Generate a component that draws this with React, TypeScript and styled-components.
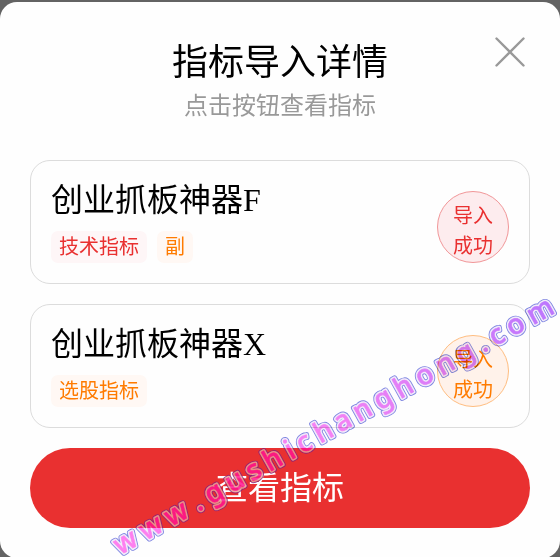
import React from 'react';
import styled, { createGlobalStyle } from 'styled-components';

const GlobalStyle = createGlobalStyle`
  *, *::before, *::after { box-sizing: border-box; }
  body { margin: 0; background: #636363; }
`;

type Tone = 'red' | 'orange';

const tones = {
  red: { text: '#e93030', tag: '#fef6f7', badge: '#fdecee', border: '#f19698' },
  orange: { text: '#ff7b00', tag: '#fff8f4', badge: '#fff2ea', border: '#ffbd80' },
};

const Screen = styled.div`
  position: relative;
  width: 560px;
  height: 557px;
  padding-top: 2px;
  overflow: hidden;
  font-family: 'Liberation Serif', 'Noto Sans CJK SC', serif;
  font-weight: 400;
`;

const Dialog = styled.main`
  position: relative;
  height: 556px;
  padding: 37px 30px 0;
  border-radius: 17px;
  background: #fefefe;
`;

const Header = styled.header`
  height: 121px;
  text-align: center;
`;

const Title = styled.h1`
  margin: 0;
  font-size: 36px;
  line-height: 48px;
  font-weight: 400;
  color: #000;
`;

const Subtitle = styled.p`
  margin: 2px 0 0;
  font-size: 24px;
  line-height: 34px;
  color: #999;
`;

const CloseButton = styled.button`
  position: absolute;
  top: 34px;
  right: 34px;
  width: 32px;
  height: 32px;
  padding: 0;
  border: 0;
  background: none;
  svg { display: block; }
`;

const CardList = styled.section`
  display: flex;
  flex-direction: column;
  gap: 20px;
`;

const Card = styled.article`
  display: flex;
  align-items: flex-start;
  justify-content: space-between;
  height: 124px;
  padding: 18px 20px 0;
  border: 1px solid #dcdcdc;
  border-radius: 20px;
`;

const CardTitle = styled.h2`
  margin: 0;
  font-size: 32px;
  line-height: 42px;
  font-weight: 400;
  color: #000;
`;

const Tags = styled.div`
  display: flex;
  gap: 10px;
  margin-top: 10px;
`;

const Tag = styled.span<{ $tone: Tone }>`
  height: 32px;
  padding: 0 8px;
  border-radius: 7px;
  font-size: 20px;
  line-height: 32px;
  color: ${(p) => tones[p.$tone].text};
  background: ${(p) => tones[p.$tone].tag};
`;

const Badge = styled.div<{ $tone: Tone }>`
  width: 72px;
  height: 72px;
  margin-top: 12px;
  padding-top: 9px;
  border: 1px solid ${(p) => tones[p.$tone].border};
  border-radius: 50%;
  font-size: 20px;
  line-height: 30px;
  text-align: center;
  color: ${(p) => tones[p.$tone].text};
  background: ${(p) => tones[p.$tone].badge};
`;

const ViewButton = styled.button`
  display: block;
  width: 100%;
  height: 80px;
  margin-top: 20px;
  padding: 0 0 6px;
  border: 0;
  border-radius: 40px;
  font: inherit;
  font-size: 32px;
  color: #fff;
  background: #e93030;
`;

const Watermark = styled.svg<{ $blend: 'multiply' | 'normal' }>`
  position: absolute;
  inset: 0;
  pointer-events: none;
  mix-blend-mode: ${(p) => p.$blend};
  opacity: ${(p) => (p.$blend === 'normal' ? 0.85 : 1)};
  text {
    font-family: 'Noto Sans', sans-serif;
    font-size: 28px;
    font-weight: 500;
    text-anchor: middle;
    stroke-linejoin: round;
  }
`;

const items: { name: string; tone: Tone; tags: { label: string; tone: Tone }[] }[] = [
  { name: '创业抓板神器F', tone: 'red', tags: [{ label: '技术指标', tone: 'red' }, { label: '副', tone: 'orange' }] },
  { name: '创业抓板神器X', tone: 'orange', tags: [{ label: '选股指标', tone: 'orange' }] },
];

const site = 'www.gushichanghong.com';
// Centre of each letter along the watermark's baseline.
const letterX =
  '12 41 70 94 113 137 158.5 180.5 200 216 238.5 260.5 283 306.5 330 354 377.5 400.5 420 436.5 458 486.5';

function SiteMark({ edge, ring, ink }: { edge: string; ring: string; ink: string }) {
  return (
    <g transform="translate(119.5 555.5) rotate(-29.1)">
      <text x={letterX} stroke={edge} strokeWidth="5.4" fill="none">{site}</text>
      <text x={letterX} stroke={ring} strokeWidth="3.6" fill="none">{site}</text>
      <text x={letterX} stroke={ink} strokeWidth="0.6" fill={ink}>{site}</text>
    </g>
  );
}

export default function App() {
  return (
    <Screen>
      <GlobalStyle />
      <Dialog>
        <Header>
          <Title>指标导入详情</Title>
          <Subtitle>点击按钮查看指标</Subtitle>
        </Header>
        <CloseButton aria-label="关闭">
          <svg width="32" height="32" fill="none" stroke="#999" strokeWidth="2.4" strokeLinecap="round">
            <path d="M2.5 2.5 29.5 29.5M29.5 2.5 2.5 29.5" />
          </svg>
        </CloseButton>
        <CardList>
          {items.map((item) => (
            <Card key={item.name}>
              <div>
                <CardTitle>{item.name}</CardTitle>
                <Tags>
                  {item.tags.map((t) => (
                    <Tag key={t.label} $tone={t.tone}>{t.label}</Tag>
                  ))}
                </Tags>
              </div>
              <Badge $tone={item.tone}>导入<br />成功</Badge>
            </Card>
          ))}
        </CardList>
        <ViewButton>查看指标</ViewButton>
      </Dialog>
      <Watermark width="560" height="557" $blend="multiply">
        <defs>
          <linearGradient id="ink" gradientUnits="userSpaceOnUse" x1="0" x2="500" y1="0" y2="0">
            <stop offset="0" stopColor="#ff80f0" />
            <stop offset="0.5" stopColor="#f583f5" />
            <stop offset="1" stopColor="#bd76ff" />
          </linearGradient>
          <clipPath id="aroundButton">
            <path clipRule="evenodd" d="M0 0H560V557H0ZM70 448H490A40 40 0 0 1 490 528H70A40 40 0 0 1 70 448Z" />
          </clipPath>
        </defs>
        <g clipPath="url(#aroundButton)">
          <SiteMark edge="#7f86e2" ring="#f3ecfb" ink="url(#ink)" />
        </g>
      </Watermark>
      <Watermark width="560" height="557" $blend="normal" aria-hidden="true">
        <defs>
          <clipPath id="onButton">
            <rect x="30" y="448" width="500" height="80" rx="40" />
          </clipPath>
        </defs>
        <g clipPath="url(#onButton)">
          <SiteMark edge="#86207d" ring="#eaa095" ink="#ff1590" />
        </g>
      </Watermark>
    </Screen>
  );
}
